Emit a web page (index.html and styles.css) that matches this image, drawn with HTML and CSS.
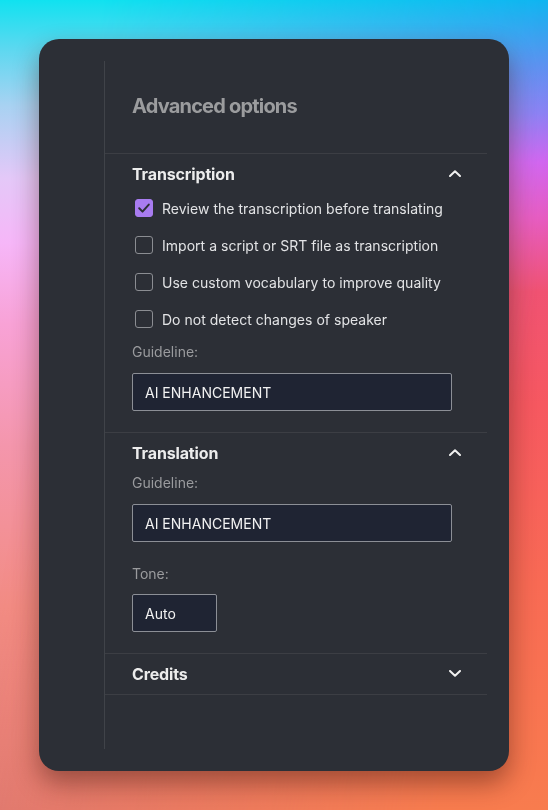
FILE: index.html
```html
<!DOCTYPE html>
<html lang="en">
<head>
<meta charset="utf-8">
<title>Advanced options</title>
<link rel="stylesheet" href="styles.css">
</head>
<body>
<div class="card">
  <div class="panel">
    <h1 class="title">Advanced options</h1>

    <section class="section open">
      <div class="sec-head">
        <span class="sec-title">Transcription</span>
        <svg class="chev" width="12" height="7" viewBox="0 0 12 7"><polyline points="1,6 6,1.2 11,6" fill="none" stroke="#f0f0f0" stroke-width="2" stroke-linecap="round" stroke-linejoin="round"/></svg>
      </div>
      <div class="checks">
        <label class="check">
          <span class="box checked"><svg width="18" height="18" viewBox="0 0 18 18"><polyline points="4.2,9.3 7.5,12.6 13.8,5.6" fill="none" stroke="#2c2f36" stroke-width="2" stroke-linecap="round" stroke-linejoin="round"/></svg></span>
          <span>Review the transcription before translating</span>
        </label>
        <label class="check"><span class="box"></span><span>Import a script or SRT file as transcription</span></label>
        <label class="check"><span class="box"></span><span>Use custom vocabulary to improve quality</span></label>
        <label class="check"><span class="box"></span><span>Do not detect changes of speaker</span></label>
      </div>
      <div class="field">
        <div class="label">Guideline:</div>
        <div class="input wide">AI ENHANCEMENT</div>
      </div>
    </section>

    <section class="section open">
      <div class="sec-head">
        <span class="sec-title">Translation</span>
        <svg class="chev" width="12" height="7" viewBox="0 0 12 7"><polyline points="1,6 6,1.2 11,6" fill="none" stroke="#f0f0f0" stroke-width="2" stroke-linecap="round" stroke-linejoin="round"/></svg>
      </div>
      <div class="field tight">
        <div class="label">Guideline:</div>
        <div class="input wide">AI ENHANCEMENT</div>
      </div>
      <div class="field tone">
        <div class="label">Tone:</div>
        <div class="input small">Auto</div>
      </div>
    </section>

    <section class="section">
      <div class="sec-head">
        <span class="sec-title">Credits</span>
        <svg class="chev" width="12" height="7" viewBox="0 0 12 7"><polyline points="1,1 6,5.8 11,1" fill="none" stroke="#f0f0f0" stroke-width="2" stroke-linecap="round" stroke-linejoin="round"/></svg>
      </div>
    </section>
  </div>
</div>
</body>
</html>
```
FILE: styles.css
```css
html {
  height: 100%;
  background: linear-gradient(180deg, #10e2f0 0%, #5cd8f0 6%, #a8d2f2 13%, #e4c8f8 22%, #f6b6f8 30%, #f8a2d6 40%, #f496ac 55%, #f28c84 75%, #e07a72 100%);
}
body {
  margin: 0;
  min-height: 100%;
  padding: 39px;
  box-sizing: border-box;
  font-family: Inter, "Liberation Sans", sans-serif;
  position: relative;
}
body::before {
  content: "";
  position: fixed;
  inset: 0;
  z-index: -1;
  background: linear-gradient(180deg, #10b0f0 0%, #5a8cf0 8%, #8a7cf2 14%, #d062ee 20%, #e65abf 27%, #f05272 36%, #f65860 50%, #f86a54 72%, #f87c4e 100%);
  -webkit-mask-image: linear-gradient(100deg, transparent 15%, #000 85%);
  mask-image: linear-gradient(100deg, transparent 15%, #000 85%);
}
.card {
  width: 470px;
  height: 732px;
  box-sizing: border-box;
  background: #2c2f36;
  border-radius: 20px;
  padding: 22px 22px 22px 65px;
  display: flex;
  box-shadow: 0 12px 26px rgba(60, 20, 10, 0.45);
}
.panel {
  flex: 1;
  border-left: 1px solid #404349;
  display: flex;
  flex-direction: column;
}
.title {
  margin: 0;
  padding: 33px 0 35px 27px;
  font-size: 20px;
  line-height: 24px;
  font-weight: 700;
  letter-spacing: -0.8px;
  color: #9b9c9e;
  border-bottom: 1px solid #3c3e44;
}
.section {
  border-bottom: 1px solid #3c3e44;
  padding: 10px 26px 10px 27px;
  display: flex;
  flex-direction: column;
}
.section.open {
  padding-bottom: 21px;
}
.sec-head {
  display: flex;
  align-items: center;
  justify-content: space-between;
  height: 20px;
}
.sec-title {
  font-size: 16px;
  font-weight: 700;
  color: #ececec;
  letter-spacing: -0.15px;
}
.chev {
  display: block;
  margin-top: -1px;
}
.checks {
  display: flex;
  flex-direction: column;
  gap: 13px;
  margin-top: 12px;
}
.check {
  display: flex;
  align-items: center;
  height: 24px;
  gap: 9px;
  padding-left: 3px;
  font-size: 14px;
  color: #e2e3e5;
  letter-spacing: 0.02px;
}
.box {
  width: 18px;
  height: 18px;
  box-sizing: border-box;
  border: 1px solid #8b8d92;
  border-radius: 3px;
  flex: none;
}
.box.checked {
  background: #a87cf0;
  border-color: #a87cf0;
}
.box.checked svg {
  display: block;
  margin: -1px;
}
.field {
  display: flex;
  flex-direction: column;
  align-items: flex-start;
  gap: 11px;
  margin-top: 11px;
}
.field.tight {
  margin-top: 10px;
}
.field.tone {
  margin-top: 22px;
  gap: 10px;
}
.label {
  font-size: 14px;
  line-height: 20px;
  color: #9a9b9e;
}
.input {
  height: 38px;
  box-sizing: border-box;
  border: 1px solid #8c8f96;
  border-radius: 2px;
  background: #1f2433;
  color: #f2f2f2;
  font-size: 14px;
  display: flex;
  align-items: center;
  padding-left: 12px;
}
.input.wide {
  width: 320px;
}
.input.small {
  width: 85px;
}
```
